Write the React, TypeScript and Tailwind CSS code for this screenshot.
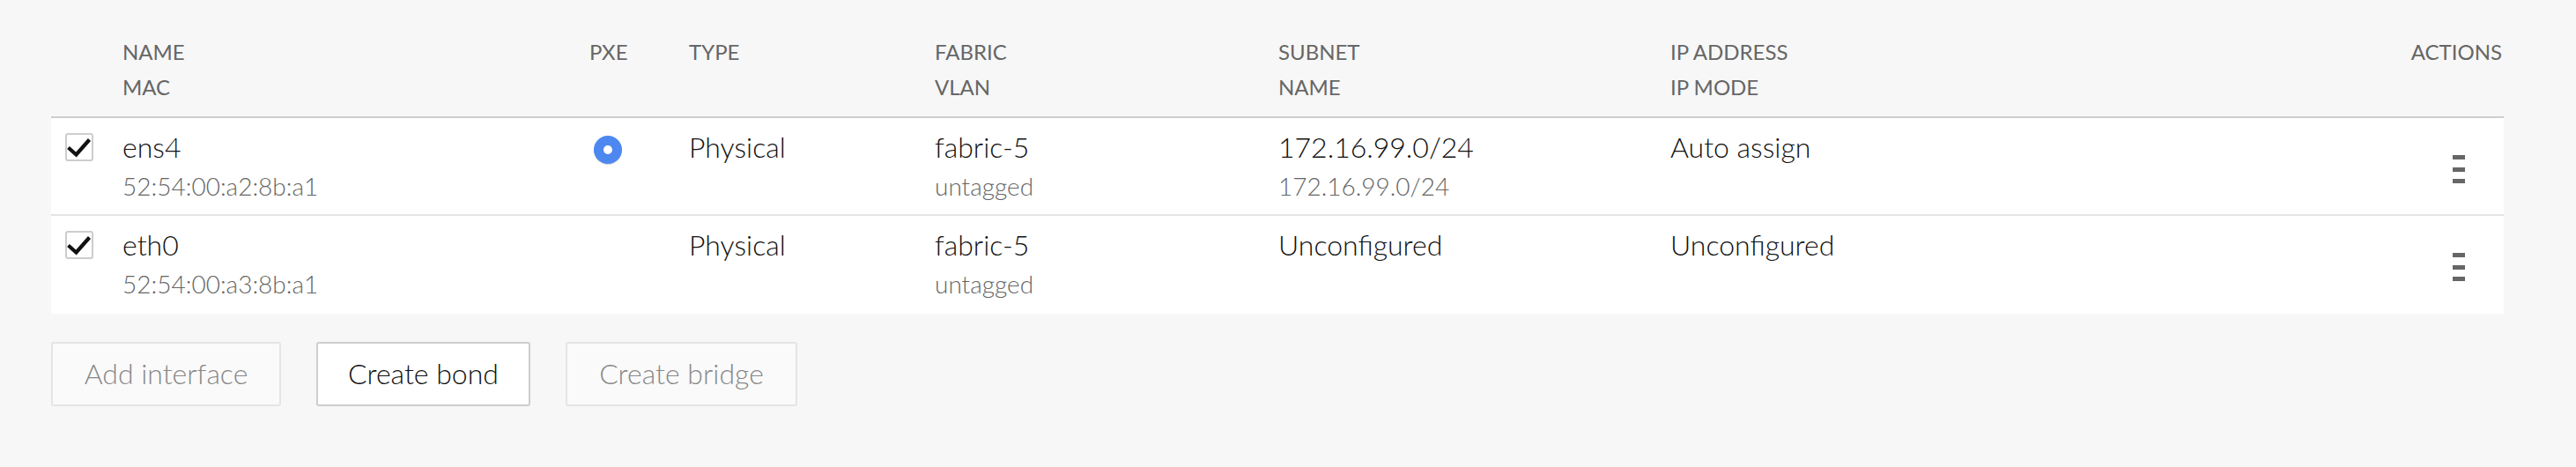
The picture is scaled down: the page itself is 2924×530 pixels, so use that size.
import React from "react";

const cols =
  "grid grid-cols-[81px_530px_113px_279px_390px_445px_1fr_200px] pr-[2px]";

function Check() {
  return (
    <div className="w-[32px] h-[32px] border-2 border-[#cdcdcd] rounded-[3px] bg-white relative">
      <svg viewBox="0 0 32 32" className="absolute left-[-2px] top-[-2px] w-[32px] h-[32px]">
        <path d="M3.5 16.5 L12.5 24.5 L27.5 7.5" fill="none" stroke="#111" strokeWidth="4.2" strokeLinecap="butt" strokeLinejoin="miter" />
      </svg>
    </div>
  );
}

function Kebab() {
  return (
    <div className="flex flex-col gap-[8.5px] w-[14px]">
      <div className="h-[5px] w-[14px] bg-[#666]" />
      <div className="h-[5px] w-[14px] bg-[#666]" />
      <div className="h-[5px] w-[14px] bg-[#666]" />
    </div>
  );
}

function Radio() {
  return (
    <div className="w-[32px] h-[32px] rounded-full bg-[#4d88f0] flex items-center justify-center shadow-[0_1px_1px_rgba(0,0,0,0.15)]">
      <div className="w-[10px] h-[10px] rounded-full bg-white" />
    </div>
  );
}

type Row = {
  name: string;
  mac: string;
  pxe: boolean;
  type: string;
  fabric: string;
  vlan: string;
  subnet: string;
  subnetName?: string;
  ip: string;
  last?: boolean;
};

const rows: Row[] = [
  {
    name: "ens4",
    mac: "52:54:00:a2:8b:a1",
    pxe: true,
    type: "Physical",
    fabric: "fabric-5",
    vlan: "untagged",
    subnet: "172.16.99.0/24",
    subnetName: "172.16.99.0/24",
    ip: "Auto assign",
  },
  {
    name: "eth0",
    mac: "52:54:00:a3:8b:a1",
    pxe: false,
    type: "Physical",
    fabric: "fabric-5",
    vlan: "untagged",
    subnet: "Unconfigured",
    ip: "Unconfigured",
    last: true,
  },
];

function Cell({ main, sub }: { main: string; sub?: string }) {
  return (
    <div className="flex flex-col">
      <div className="text-[32px] leading-[48px] text-[#111] font-light">{main}</div>
      {sub ? <div className="text-[28px] leading-[40px] text-[#666] font-light">{sub}</div> : null}
    </div>
  );
}

export default function App() {
  return (
    <div className="w-[2924px] h-[530px] bg-[#f7f7f7] font-['Lato','Liberation_Sans',sans-serif] pl-[58px] pr-[82px] overflow-hidden">
      <div className={`${cols} pt-[39px] pb-[13px] border-b-2 border-[#cdcdcd] text-[24px] leading-[40px] text-[#666] uppercase`}>
        <div />
        <div>
          <div>Name</div>
          <div>Mac</div>
        </div>
        <div>PXE</div>
        <div>Type</div>
        <div>
          <div>Fabric</div>
          <div>VLAN</div>
        </div>
        <div>
          <div>Subnet</div>
          <div>Name</div>
        </div>
        <div>
          <div>IP Address</div>
          <div>IP Mode</div>
        </div>
        <div className="text-right">Actions</div>
      </div>
      {rows.map((r) => (
        <div
          key={r.name}
          className={`${cols} bg-white pt-[8.5px] pb-[12.5px] border-b-2 ${r.last ? "border-white" : "border-[#e5e5e5]"}`}
        >
          <div className="pl-[16px] pt-[8.5px]">
            <Check />
          </div>
          <Cell main={r.name} sub={r.mac} />
          <div className="pl-[5px] pt-[11.5px]">{r.pxe ? <Radio /> : null}</div>
          <Cell main={r.type} />
          <Cell main={r.fabric} sub={r.vlan} />
          <Cell main={r.subnet} sub={r.subnetName} />
          <Cell main={r.ip} />
          <div className="flex justify-end pr-[42px] pt-[33.5px]">
            <Kebab />
          </div>
        </div>
      ))}
      <div className="flex gap-[40px] mt-[32px] text-[32px] font-light">
        <div className="h-[73px] w-[261px] flex items-center justify-center pb-[2px] border-2 border-[#e5e5e5] rounded-[3px] bg-[#fafafa] text-[#888]">
          Add interface
        </div>
        <div className="h-[73px] w-[243px] flex items-center justify-center pb-[2px] border-2 border-[#cdcdcd] rounded-[3px] bg-white text-[#111]">
          Create bond
        </div>
        <div className="h-[73px] w-[263px] flex items-center justify-center pb-[2px] border-2 border-[#e5e5e5] rounded-[3px] bg-[#fafafa] text-[#888]">
          Create bridge
        </div>
      </div>
    </div>
  );
}
